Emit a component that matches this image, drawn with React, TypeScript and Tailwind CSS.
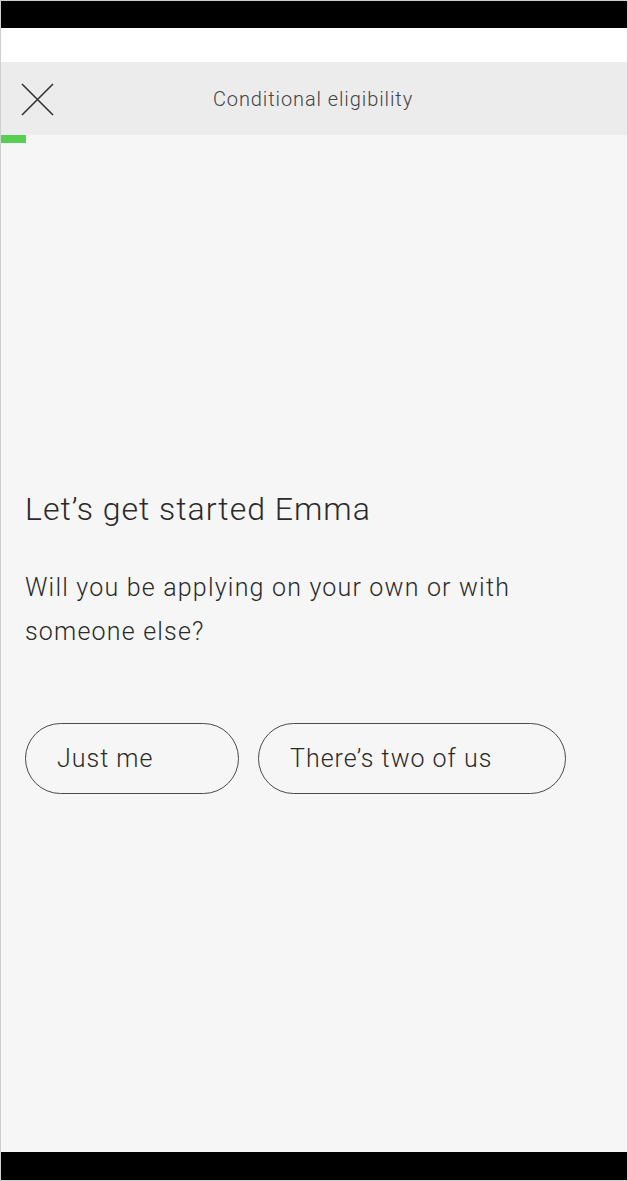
import React from "react";

export default function App() {
  const font = { fontFamily: "Roboto, 'Liberation Sans', sans-serif" };
  return (
    <div className="w-[628px] h-[1181px] border border-[#cfcfcf] flex flex-col bg-black" style={font}>
      <div className="h-[27px] bg-black shrink-0" />
      <div className="h-[34px] bg-white shrink-0" />
      <div className="h-[73px] bg-[#ececec] shrink-0 relative flex items-center justify-center">
        <svg className="absolute left-[20px] top-[21px]" width="33" height="33" viewBox="0 0 33 33">
          <path d="M1 1 L32 32 M32 1 L1 32" stroke="#333" strokeWidth="1.6" fill="none" />
        </svg>
        <span className="text-[20px] font-light text-[#444] tracking-[0.9px] ml-[-2px]">Conditional eligibility</span>
      </div>
      <div className="flex-1 bg-[#f6f6f6] flex flex-col">
        <div className="h-[8px] w-[25px] bg-[#58cf52]" />
        <div className="px-[24px] pt-[346px]">
          <h1 className="text-[32px] font-light text-[#2a2a2a] leading-[40px] tracking-[1px]">Let’s get started Emma</h1>
          <p className="mt-[37px] text-[25px] font-light text-[#2a2a2a] leading-[44px] tracking-[1.2px] w-[540px]">
            Will you be applying on your own or with<br />someone else?
          </p>
          <div className="mt-[69px] flex gap-[19px]">
            <button className="w-[214px] h-[71px] rounded-full border-[1.5px] border-[#4a4a4a] text-left pl-[31px] text-[25px] font-light text-[#2a2a2a] tracking-[1px]">
              Just me
            </button>
            <button className="w-[308px] h-[71px] rounded-full border-[1.5px] border-[#4a4a4a] text-left pl-[31px] text-[25px] font-light text-[#2a2a2a] tracking-[1px]">
              There’s two of us
            </button>
          </div>
        </div>
      </div>
      <div className="h-[28px] bg-black shrink-0" />
    </div>
  );
}
